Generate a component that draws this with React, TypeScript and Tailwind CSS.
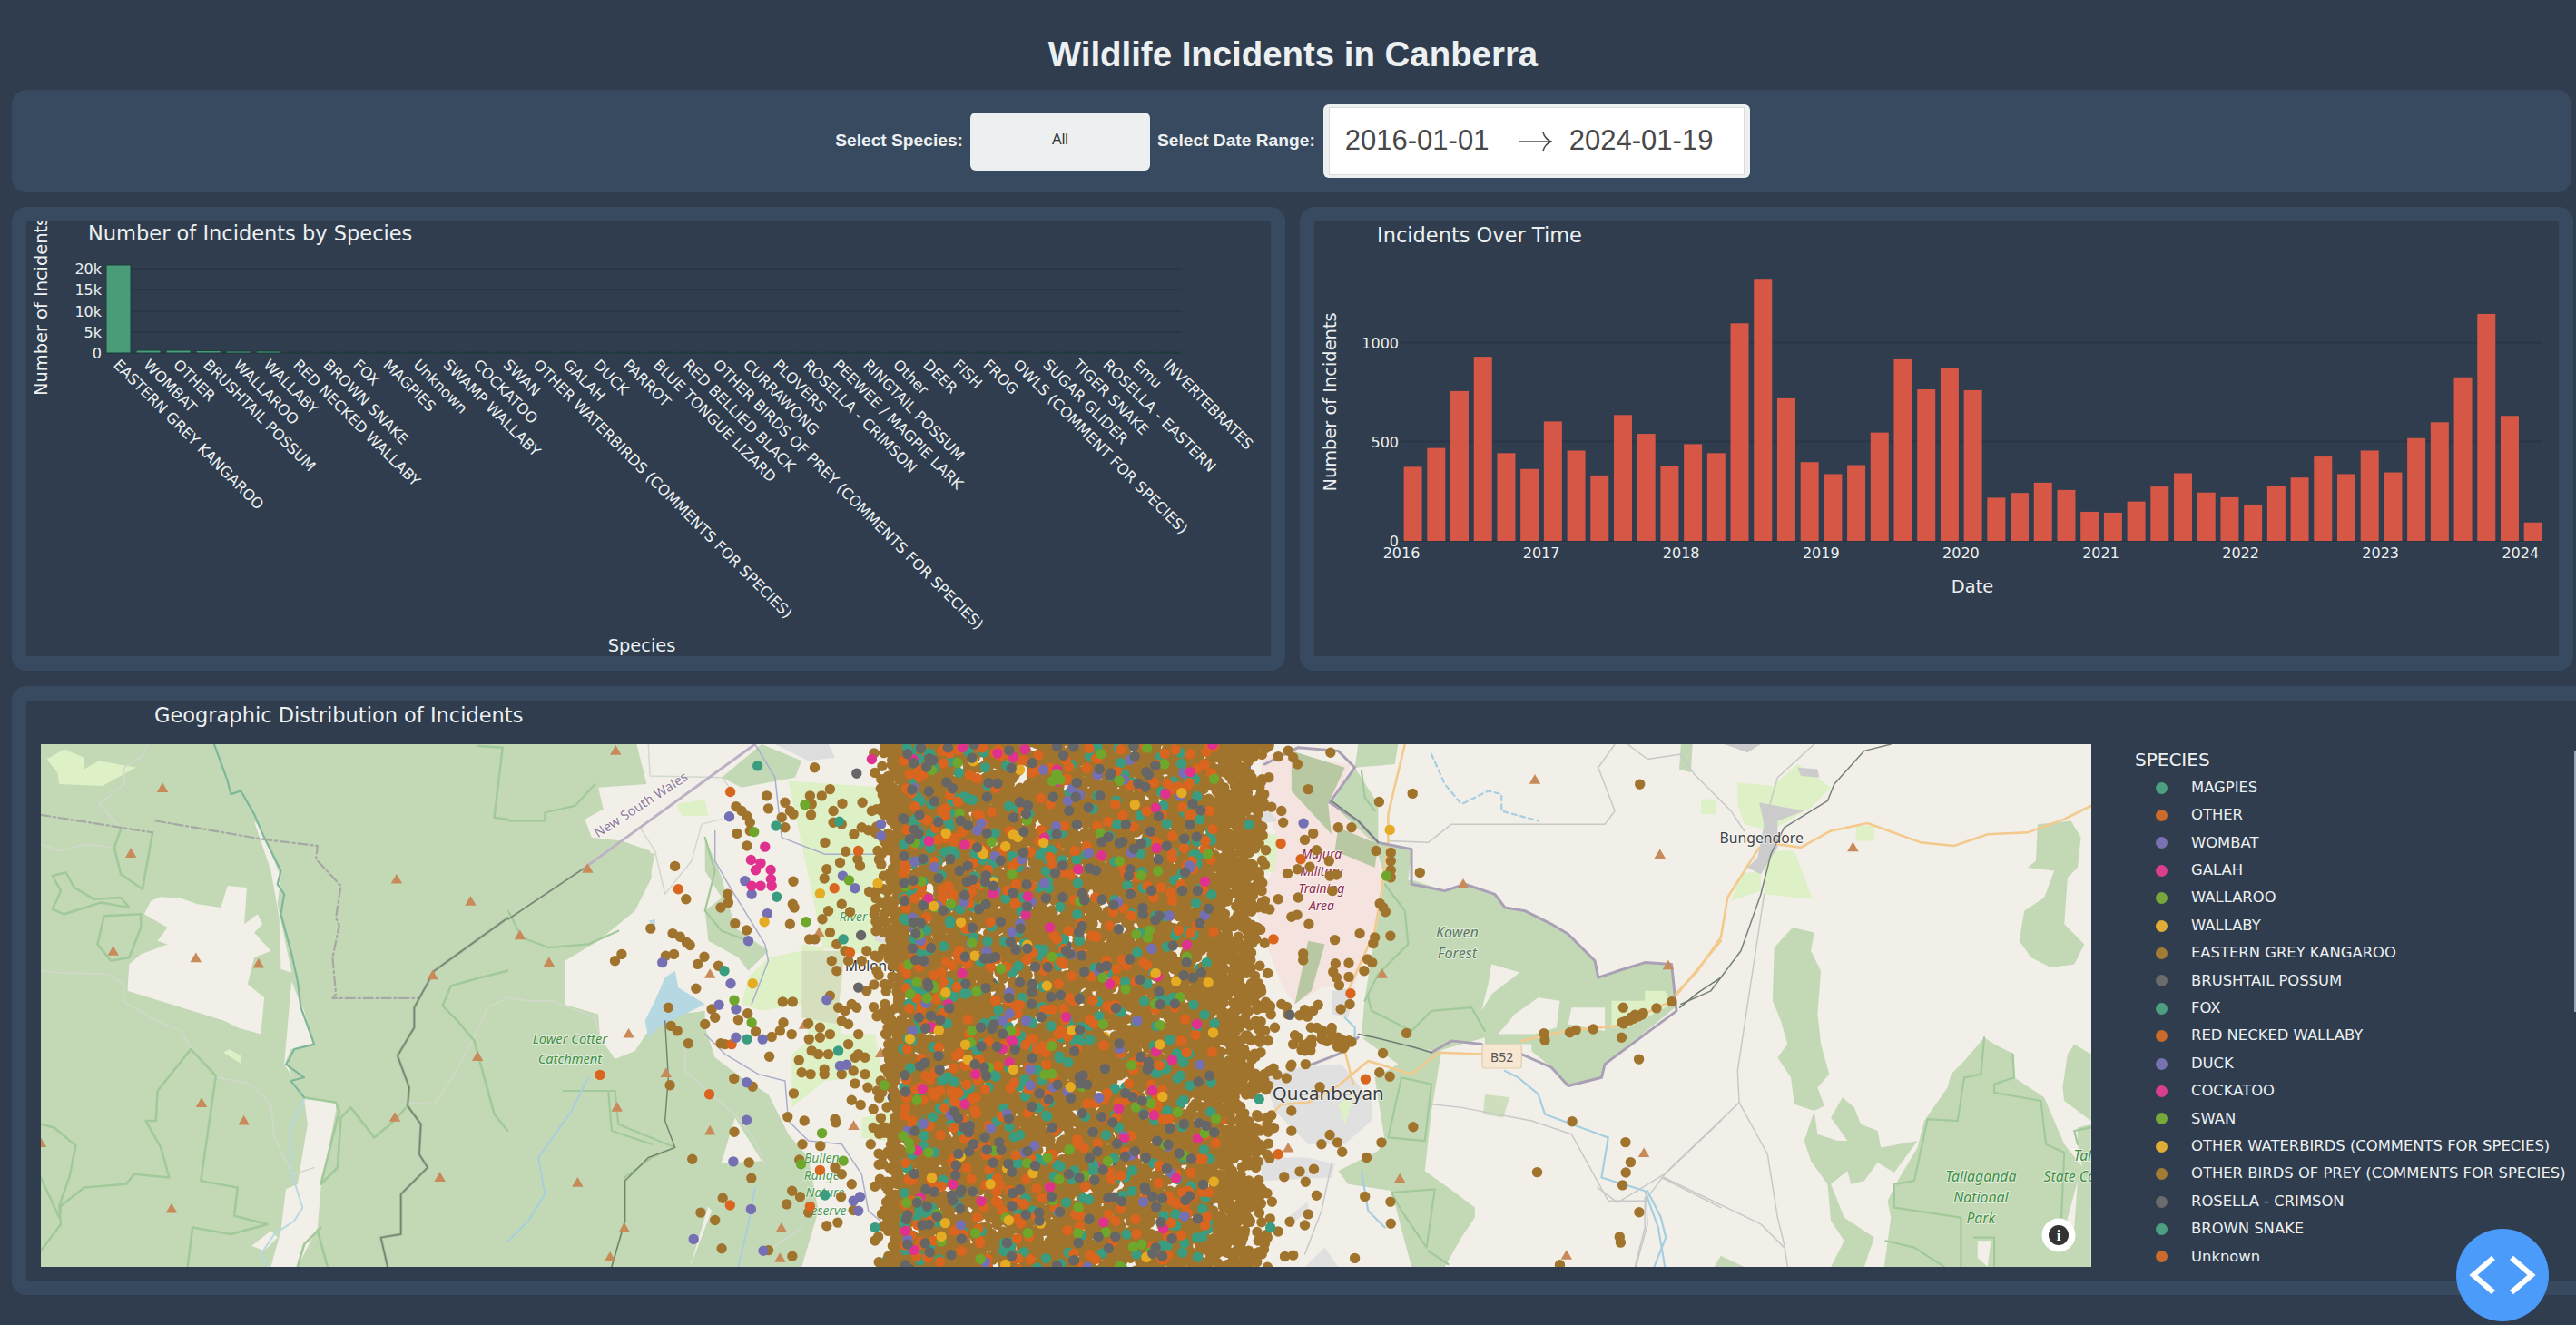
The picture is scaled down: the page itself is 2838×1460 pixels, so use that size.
const PLOT_FONT = "'DejaVu Sans', sans-serif";
const MAP_FONT = "'Noto Sans', 'Open Sans', sans-serif";

const speciesBars = [
  ["EASTERN GREY KANGAROO", 97],
  ["WOMBAT", 3],
  ["OTHER", 3],
  ["BRUSHTAIL POSSUM", 2.5],
  ["WALLAROO", 2],
  ["WALLABY", 2],
  ["RED NECKED WALLABY", 1],
  ["BROWN SNAKE", 1],
  ["FOX", 1],
  ["MAGPIES", 1],
  ["Unknown", 1],
  ["SWAMP WALLABY", 1],
  ["COCKATOO", 1],
  ["SWAN", 1],
  ["OTHER WATERBIRDS (COMMENTS FOR SPECIES)", 1],
  ["GALAH", 1],
  ["DUCK", 1],
  ["PARROT", 1],
  ["BLUE TONGUE LIZARD", 1],
  ["RED BELLIED BLACK", 1],
  ["OTHER BIRDS OF PREY (COMMENTS FOR SPECIES)", 1],
  ["CURRAWONG", 1],
  ["PLOVERS", 1],
  ["ROSELLA - CRIMSON", 1],
  ["PEEWEE / MAGPIE LARK", 1],
  ["RINGTAIL POSSUM", 1],
  ["Other", 1],
  ["DEER", 1],
  ["FISH", 1],
  ["FROG", 1],
  ["OWLS (COMMENT FOR SPECIES)", 1],
  ["SUGAR GLIDER", 1],
  ["TIGER SNAKE", 1],
  ["ROSELLA - EASTERN", 1],
  ["Emu", 1],
  ["INVERTEBRATES", 1],
] as const;

// top edge of each two-month bar, in px from the top of the page
const timeTops = [
  1090, 1046, 913, 833, 1058, 1095, 984, 1052, 1110, 969, 1013, 1088, 1037, 1058, 755, 651, 930,
  1079, 1107, 1086, 1010, 839, 909, 860, 911, 1162, 1151, 1127, 1144, 1195, 1197, 1171, 1136, 1105,
  1150, 1161, 1178, 1135, 1115, 1066, 1107, 1052, 1103, 1023, 986, 881, 733, 971, 1220,
].map((v) => v / 2.119);

const legendColors = [
  "bg-[#4da07f]",
  "bg-[#cc6a2b]",
  "bg-[#7872b0]",
  "bg-[#d93f8e]",
  "bg-[#77a83a]",
  "bg-[#dfad36]",
  "bg-[#a27b34]",
  "bg-[#6b6b6b]",
];

const legendItems = [
  "MAGPIES",
  "OTHER",
  "WOMBAT",
  "GALAH",
  "WALLAROO",
  "WALLABY",
  "EASTERN GREY KANGAROO",
  "BRUSHTAIL POSSUM",
  "FOX",
  "RED NECKED WALLABY",
  "DUCK",
  "COCKATOO",
  "SWAN",
  "OTHER WATERBIRDS (COMMENTS FOR SPECIES)",
  "OTHER BIRDS OF PREY (COMMENTS FOR SPECIES)",
  "ROSELLA - CRIMSON",
  "BROWN SNAKE",
  "Unknown",
];

const BROWN = "#a0742c";
const dotColors = {
  teal: "#3a9d7f",
  orange: "#d9651f",
  purple: "#7570b3",
  pink: "#e0318f",
  green: "#6ea72b",
  yellow: "#e4ab23",
  grey: "#666666",
};

const SCALE = 0.3673;
const TILE_X = { a: 0, b: 515, c: 1275, d: 1715 };

function parsePoints(s: string, ox: number) {
  return s
    .trim()
    .split(/\s+/)
    .map((p) => {
      const [x, y] = p.split(",").map(Number);
      return [ox + x * SCALE, y * SCALE] as const;
    });
}

function dotsPath(points: ReadonlyArray<readonly [number, number]>) {
  return points.map(([x, y]) => `M${x.toFixed(1)} ${y.toFixed(1)}h0`).join("");
}

function makeRandom(seed: number) {
  return () => {
    seed = (seed + 0x6d2b79f5) | 0;
    let t = Math.imul(seed ^ (seed >>> 15), 1 | seed);
    t = (t + Math.imul(t ^ (t >>> 7), 61 | t)) ^ t;
    return ((t ^ (t >>> 14)) >>> 0) / 4294967296;
  };
}

const brownB =
  "919,70 775,155 780,193 905,155 910,180 908,212 683,187 700,200 715,215 725,235 725,260 686,268 716,305 830,175 845,200 820,220 830,250 855,210 940,155 965,135 975,200 975,235 1000,240 1002,178 1062,175 1090,200 1105,195 1037,270 1060,250 1080,258 950,295 1012,322 1050,320 1048,345 995,355 1055,365 955,375 948,403 855,412 1108,320 853,480 858,490 658,450 660,475 637,490 680,538 715,558 845,540 1000,480 1025,503 960,500 942,525 500,366 533,465 427,553 493,568 515,578 535,595 545,603 320,650 340,630 472,635 497,630 568,660 588,638 630,665 563,733 480,790 610,795 620,820 590,840 488,845 507,860 540,898 637,898 650,900 690,827 718,808 742,862 790,878 815,860 825,835 850,870 823,773 853,773 900,838 902,885 935,850 935,880 965,870 910,920 930,930 960,930 783,937 872,948 880,985 907,990 948,975 948,990 1000,990 1035,980 1070,990 1040,1018 1040,940 1070,940 1030,1068 1057,1082 1095,1095 677,1003 733,1027 485,1023 856,1048 838,1118 888,1130 980,1125 982,1135 1095,1150 1087,1200 678,1163 882,1200 936,1205 552,1245 722,1255 873,1247 729,1302 643,1362 835,1380 851,1340 875,1358 998,1358 577,1405 620,1428 900,1405 955,1445 988,1435 640,1513 780,1518 852,1536 980,1270 1000,1290 1030,1320 1035,1398 903,585 920,585 965,565 985,600 1010,620 985,680 1020,650 970,650 965,755 990,790 1010,800 1030,780 1060,650 1075,620 1100,635 1075,740 1045,790 1000,830 1020,840 1050,870 1020,900 1050,930";
const brownC =
  "397,25 330,135 198,150 220,188 250,200 255,235 212,100 240,37 298,60 285,40 270,20 543,173 643,148 1325,120 420,250 460,250 345,268 320,287 203,318 355,318 534,320 578,325 578,350 393,350 335,368 298,375 268,388 395,395 415,392 665,385 578,378 578,400 403,440 300,460 240,465 200,470 545,478 555,490 562,503 297,512 280,518 332,540 485,568 577,575 530,580 410,587 525,598 315,628 315,648 412,658 452,657 508,645 522,655 498,680 405,683 452,698 415,700 423,723 455,780 360,782 428,795 320,797 345,800 625,867 230,850 554,927 460,893 290,873 300,880 285,900 320,920 340,900 370,860 400,860 420,880 435,912 322,960 265,1002 544,985 575,997 365,1028 280,1100 212,1122 645,1148 210,1163 280,1160 395,1172 370,1200 418,1195 432,1223 190,1213 550,1195 505,1240 1122,1132 1017,1284 1282,1194 1297,1254 1283,1285 1273,1323 1323,1404 1264,1478 1267,1495 500,1357 577,1373 578,1438 355,1354 347,1275 305,1282 258,1298 322,1313 195,1340 185,1355 330,1410 275,1433 320,1443 240,1462 200,1480 200,1498 130,1495 45,1505 97,1527 260,1537 285,1533 470,1542 1085,1562 150,1565 1037,868 1040,888 1115,865 1133,858 1185,855 1275,790 1270,880 1322,945 1421,772 1375,792";

const sparse: Record<keyof typeof dotColors, string[]> = {
  teal: ["748,65 803,245 993,232 805,458 648,680 716,885 990,920 950,1353 1005,585 1100,1450", "152,242 217,1450 183,1065"],
  orange: ["666,143 510,435 275,992 670,900 603,1050 935,1278 905,1387 665,1383 978,432 1050,320 1025,625", "248,298 308,345 226,585 457,748 502,1005 240,1230"],
  purple: ["663,217 710,410 730,450 777,508 720,590 462,655 667,718 632,782 683,795 683,880 763,885 715,1015 715,1128 675,1252 728,1395 556,1485 765,1520 1040,432 1118,240 1118,275 1003,395 995,965 1015,962 1035,1370 1055,1358 1050,1400 955,767", "316,237"],
  pink: ["770,308 728,347 757,357 742,378 787,377 788,405 730,425 757,425 790,425 1090,45", ""],
  green: ["890,182 737,263 893,533 1022,408 678,768 730,835 941,1167 1005,1250 878,1260 1128,1023", "565,395"],
  yellow: ["935,448 768,533 733,718 1108,418", "575,257"],
  grey: ["1058,573 1050,730 1045,88", "275,812"],
};

function buildDots() {
  const random = makeRandom(20240119);
  const under: Record<string, [number, number][]> = {};
  const over: Record<string, [number, number][]> = {};
  const keys = Object.keys(dotColors);
  keys.forEach((k) => {
    under[k] = [];
    over[k] = [];
  });
  const pick = () => {
    const r = random();
    if (r < 0.34) return "orange";
    if (r < 0.6) return "teal";
    if (r < 0.82) return "grey";
    if (r < 0.87) return "purple";
    if (r < 0.91) return "pink";
    if (r < 0.97) return "green";
    return "yellow";
  };
  // a run of dots along a road, with some scatter either side
  const road = (x1: number, y1: number, x2: number, y2: number, n: number, spread: number) => {
    const out: [number, number][] = [];
    for (let i = 0; i < n; i++) {
      const t = random();
      out.push([
        TILE_X.c + (x1 + (x2 - x1) * t + (random() - 0.5) * spread) * SCALE,
        (y1 + (y2 - y1) * t + (random() - 0.5) * spread) * SCALE,
      ]);
    }
    return out;
  };
  // the dense band of the scatter: left edge ~ 925, right edge ~ 1341 in map px
  const brown: [number, number][] = [];
  for (let i = 0; i < 9000; i++) {
    const y = random() * 586 - 5;
    const edge = (random() + random()) * 22 - 22;
    const x = 930 + edge + random() * (411 - edge * 2);
    brown.push([x, y]);
  }
  for (let i = 0; i < 300; i++) {
    under[pick()].push([930 + random() * 400, random() * 580]);
  }
  for (let i = 0; i < 1500; i++) {
    const x = 950 + Math.pow(random(), 1.2) * 345;
    over[pick()].push([x, random() * 580]);
  }
  brown.push(...parsePoints(brownB, TILE_X.b), ...parsePoints(brownC, TILE_X.c));
  brown.push(...road(1270, 838, 1355, 795, 14, 8));
  brown.push(...road(180, 775, 320, 810, 10, 30));
  brown.push(...road(320, 830, 440, 905, 12, 40));
  brown.push(...road(300, 920, 420, 850, 9, 40));
  brown.push(...road(180, 1000, 300, 960, 8, 35));
  keys.forEach((k) => {
    const [b, c] = sparse[k as keyof typeof dotColors];
    over[k].push(...parsePoints(b, TILE_X.b));
    if (c) over[k].push(...parsePoints(c, TILE_X.c));
  });
  return { brown, under, over };
}

const dots = buildDots();

function triangles(s: string) {
  return s
    .trim()
    .split(/\s+/)
    .map((p) => {
      const [x, y] = p.split(",").map(Number);
      return `M${x - 17} ${y + 14}h34l-17 -29z`;
    })
    .join("");
}

function Lines({ d, stroke, w, dash }: { d: string[]; stroke: string; w: number; dash?: string }) {
  return (
    <g fill="none" stroke={stroke} strokeWidth={w} strokeLinejoin="round" strokeLinecap="round" strokeDasharray={dash}>
      {d.map((p) => (
        <polyline key={p} points={p} />
      ))}
    </g>
  );
}

function Polys({ d, fill }: { d: string[]; fill: string }) {
  return (
    <g fill={fill}>
      {d.map((p) => (
        <polygon key={p} points={p} />
      ))}
    </g>
  );
}

const FOREST = "#c3d9b6";
const PALE = "#def0c6";
const LAND = "#f2efe9";
const EDGE = "#a2c99a";
const TRI = "#c98a5a";
const PATH = "#d2d8cc";
const ROADLINE = "#c8c8c8";
const WATER = "#b5d8e3";
const BORDER = "#aaa0b6";

function MapLabel({
  x,
  y,
  size,
  fill,
  children,
  italic = true,
  anchor = "middle",
}: {
  x: number;
  y: number;
  size: number;
  fill: string;
  children: string;
  italic?: boolean;
  anchor?: "middle" | "start";
}) {
  return (
    <text
      x={x}
      y={y}
      fontSize={size}
      fill={fill}
      fontFamily={MAP_FONT}
      fontStyle={italic ? "italic" : "normal"}
      textAnchor={anchor}
      stroke="#ffffff"
      strokeOpacity={0.55}
      strokeWidth={5}
      paintOrder="stroke"
    >
      {children}
    </text>
  );
}

function TerrainMap() {
  const s = `scale(${SCALE})`;
  return (
    <svg width={2259} height={576} viewBox="0 0 2259 576" className="block shrink-0 bg-[#f2efe9]">
      {/* west: pine forest and Cotter */}
      <g transform={s}>
        <rect x={0} y={0} width={1402} height={1568} fill={FOREST} />
        <Polys
          fill={LAND}
          d={[
            "310,510 330,470 360,458 420,462 470,480 540,490 560,425 618,430 610,540 650,510 665,540 640,565 690,620 640,640 620,720 670,760 660,870 590,850 550,830 260,740 265,660 300,630 380,600 350,590 380,550",
            "640,232 660,250 720,400 710,480 752,685 720,675 715,520 690,380",
            "752,710 775,770 790,800 815,900 750,915 735,950 755,1000 730,960",
            "790,1065 885,1075 885,1100 840,1330 830,1450 770,1568 690,1568 720,1460 735,1335 770,1320 800,1140",
            "632,1505 690,1460 710,1480 670,1520",
          ]}
        />
        <Polys
          fill={PALE}
          d={["18,45 70,15 130,40 130,75 175,50 285,70 185,125 55,120 50,85", "548,925 565,915 600,935 600,958"]}
        />
        <Lines
          stroke={PATH}
          w={4}
          d={[
            "320,0 300,40 250,70 250,120 175,180 240,250",
            "0,300 60,320 130,300 220,310",
            "0,680 50,685 200,690 250,720 245,770 330,820 420,860 450,910 530,1000 630,1020 690,1080 700,1180 750,1280 760,1290 820,1270",
            "1100,1075 1180,1080 1240,990 1300,880 1340,790 1400,760",
          ]}
        />
        <Lines
          stroke={EDGE}
          w={7}
          d={[
            "240,255 220,310 240,390 305,435 335,265",
            "35,395 75,385 100,430 160,465 240,460 265,490 180,475 70,510 35,495 60,440 35,395",
            "190,515 300,510 300,550 265,640 210,650 170,600 190,515",
            "1310,5 1385,10 1360,220 1470,235 1485,125 1515,125 1535,0",
            "450,915 350,1040 345,1130 315,1130 360,1210 385,1300 280,1290 255,1320 130,1330 60,1385 55,1420 0,1300",
            "450,915 525,995 480,1310 590,1330 580,1415 680,1440 570,1470 455,1450 440,1568",
            "0,1140 40,1150 105,1205 85,1300 55,1385 60,1440 0,1520",
            "790,1060 885,1075 895,1100 840,1320 890,1270 900,1120 930,1090 1000,1180 1060,1130 1100,1085",
            "1400,680 1320,700 1230,725 1205,785 1250,830 1300,890 1360,1110 1400,1160",
            "840,1450 790,1500 770,1568",
            "830,1460 860,1568",
          ]}
        />
        <Lines
          stroke="#7fb79a"
          w={6}
          d={["520,0 560,110 570,150 600,140 640,210 670,280 720,380 710,420 730,450 720,510 750,620 770,710 780,790 820,900 760,915 745,945 735,960 790,1000 750,1010 790,1060"]}
        />
        <Lines stroke={WATER} w={5} d={["790,1065 750,1150 750,1280 785,1390 760,1430 700,1470 660,1530 680,1568"]} />
        <Lines stroke="#a7a8a4" w={6} dash="28 10 6 10" d={["0,212 335,265", "345,230 665,285 830,305 825,345 900,425 885,520 895,545 875,640 885,750 875,762 1130,762"]} />
        <Lines stroke="#a6bc9f" w={9} d={["1402,520 1180,680 1120,790 1120,850 1070,935 1105,1030 1100,1085 1140,1140 1135,1230 1160,1270 1080,1350 1080,1470 1020,1480 1040,1568"]} />
        <Lines stroke="#74836f" w={4} d={["1402,520 1180,680 1120,790 1120,850 1070,935 1105,1030 1100,1085 1140,1140 1135,1230 1160,1270 1080,1350 1080,1470 1020,1480 1040,1568"]} />
        <path fill={TRI} d={triangles("365,130 270,326 217,620 465,640 653,657 1067,404 1289,470 1175,692 1310,936 1062,1118 482,1075 609,1128 392,1392 1197,1298 0,1195")} />
      </g>

      {/* Cotter to Molonglo */}
      <g transform={`translate(${TILE_X.b}) ${s}`}>
        <rect x={0} y={0} width={1200} height={1568} fill={LAND} />
        <path
          fill={FOREST}
          d="M0 0L385 0L415 120L270 130L285 195L230 225L250 280L340 290L425 320L430 400L380 500L270 590L170 650L165 720L130 770L270 810L275 880L320 945L380 920L440 830L510 810L590 800L590 850L620 940L700 1000L780 1050L840 1170L900 1240L930 1400L880 1568L545 1568L610 1400L555 1330L600 1260L760 1250L680 1120L0 1568Z"
        />
        <path fill={FOREST} d="M0 600L170 640L165 1568L0 1568ZM100 1000L680 1120L545 1568L100 1568Z" />
        <Polys
          fill={FOREST}
          d={[
            "590,280 640,400 680,550 780,620 720,680 690,640 600,590 590,500 640,460 590,380",
            "760,0 880,50 860,100 700,130 640,100",
            "350,300 440,330 420,420 360,500 330,480 360,400",
          ]}
        />
        <Polys
          fill={PALE}
          d={[
            "840,110 1130,130 1130,640 880,600 890,770 900,890 850,930 850,1090 950,1010 1060,1000 1140,1100 1100,870 1000,870",
            "505,180 590,165 600,215 520,215",
            "780,640 880,620 880,780 760,800 700,780 720,700",
            "1060,1120 1150,1100 1130,1190 1060,1180",
          ]}
        />
        <Polys fill="#d5dfbd" d={["880,620 1010,620 985,840 880,820"]} />
        <Polys fill="#dddddd" d={["1090,540 1150,530 1140,600 1100,590", "800,0 960,0 980,40 900,50"]} />
        <Polys
          fill={WATER}
          d={["470,700 500,680 510,730 590,780 530,810 470,840 450,850 420,880 410,830 440,770", "420,530 440,525 440,545"]}
        />
        <Lines stroke={EDGE} w={6} d={["0,230 110,230 110,205 200,185 260,120", "0,500 40,580 120,610 240,600 330,560", "165,1040 320,1040 330,1140 500,1210 430,1240 350,1300 350,1430 310,1568", "300,1040 310,1160 430,1200", "590,280 620,380 590,500 640,560 720,590"]} />
        <Lines stroke={PATH} w={4} d={["420,0 425,95 640,100 680,150", "0,760 60,770 130,770 260,820 275,880", "530,900 530,980 620,1060 680,1110 735,1180 770,1260", "620,1520 780,1520 880,1450", "395,250 440,320 470,450 550,350 580,240 640,225"]} />
        <Lines stroke="#a9aecb" w={4} d={["740,0 800,100 820,280 950,330 1110,330", "620,260 620,350 660,420 770,600 780,650 730,780", "590,870 650,930 750,990 830,1010 840,1130 900,1190 1000,1200 1060,1290 1080,1400 1200,1500"]} />
        <Lines stroke="#a5cfe0" w={5} d={["0,1490 60,1430 110,1350 90,1240 190,1100 240,1000", "740,1330 720,1440 690,1568"]} />
        <Lines stroke="#7c8878" w={5} d={["0,525 230,370"]} />
        <Lines stroke="#bdb1c6" w={8} d={["230,370 740,0"]} />
        <Lines stroke="#74836f" w={4} d={["470,830 480,1000 470,1130 500,1210 420,1240 350,1310 350,1430 310,1568"]} />
        <path fill={TRI} d={triangles("322,18 238,372 35,572 122,653 605,688 361,867 473,985 326,1088 605,1158 208,1314 348,1450 305,1537 819,1450 815,1540 1036,1143 932,563 888,840 1117,925")} />
        <g transform="rotate(-33 400 185)">
          <MapLabel x={400} y={195} size={40} fill="#8e7a9a" italic={false}>
            New South Wales
          </MapLabel>
        </g>
        <MapLabel x={185} y={898} size={40} fill="#3f8f45">
          Lower Cotter
        </MapLabel>
        <MapLabel x={185} y={958} size={40} fill="#3f8f45">
          Catchment
        </MapLabel>
        <MapLabel x={1035} y={530} size={38} fill="#4b9a55">
          River
        </MapLabel>
        <MapLabel x={940} y={1254} size={38} fill="#4b9a55">
          Bullen
        </MapLabel>
        <MapLabel x={940} y={1306} size={38} fill="#4b9a55">
          Range
        </MapLabel>
        <MapLabel x={950} y={1358} size={38} fill="#4b9a55">
          Nature
        </MapLabel>
        <MapLabel x={950} y={1412} size={38} fill="#4b9a55">
          Reserve
        </MapLabel>
        <MapLabel x={1010} y={682} size={42} fill="#333333" italic={false} anchor="start">
          Molonglo Valley
        </MapLabel>
      </g>

      {/* Queanbeyan and Kowen */}
      <g transform={`translate(${TILE_X.c}) ${s}`}>
        <Polys
          fill={FOREST}
          d={[
            "650,410 740,440 800,420 890,450 920,490 980,500 1060,540 1110,570 1190,650 1200,700 1260,680 1340,655 1420,660 1430,790 1260,930 1220,960 1210,1000 1110,1025 1060,970 1000,920 1000,900 860,900 860,880 720,920 520,900 490,870 500,760 560,400",
            "470,70 540,180 540,290 640,320 630,410 560,400 530,300 400,180",
            "600,0 590,60 470,70 480,0",
            "490,880 700,920 730,920 720,980 700,1100 680,1280 750,1330 830,1390 830,1420 790,1480 740,1568 640,1568 580,1340 450,1320 420,1280 540,1220 560,1190 530,1000 600,960",
          ]}
        />
        <Polys
          fill={LAND}
          d={[
            "880,660 965,685 880,750 850,800 870,720",
            "1020,760 1085,770 1075,850 1010,870 900,870 950,810",
            "1120,790 1220,790 1220,860 1110,840",
          ]}
        />
        <Polys fill={PALE} d={["1240,770 1340,770 1340,740 1400,740 1420,780 1290,850 1240,850", "180,270 240,270 235,385 180,380"]} />
        <Polys fill="#f5e3df" d={["190,30 460,60 400,180 530,300 550,400 530,560 470,720 370,730 290,780 250,720 190,560 170,480 230,370 240,290 190,130"]} />
        <Polys fill="#b7c8a2" d={["280,20 440,70 390,180 400,270 280,140", "420,250 540,300 530,370 410,320", "330,590 380,600 340,740 290,780"]} />
        <Polys fill="#e0e0e0" d={["200,1000 300,970 430,960 520,1070 520,1130 440,1200 330,1200 230,1100", "190,1240 330,1240 410,1260 400,1300 190,1310", "270,1420 330,1370 330,1400 280,1440", "320,1568 380,1510 420,1568"]} />
        <Polys fill="#dedede" d={["400,740 470,730 450,820 400,810", "190,180 240,230 180,240"]} />
        <Polys fill="#cddfbc" d={["860,1050 935,1060 915,1120 855,1110"]} />
        <Polys fill={PALE} d={["420,1080 470,1050 440,1140"]} />
        <Lines stroke={ROADLINE} w={4} d={["1250,0 1200,70 1250,200 1220,240 1020,240 760,240 690,295 570,290", "700,1080 790,1090 1000,1130 1120,1170 1230,1370 1340,1370 1400,1290 1568,1130", "1390,1300 1568,1390", "1340,1360 1340,1450 1310,1568", "400,1260 370,1400 320,1530"]} />
        <Lines stroke="#a5cfe0" w={6} d={["920,980 960,1000 1020,1050 1040,1110 1230,1180 1210,1300 1340,1340 1380,1450 1400,1568", "490,1280 510,1400 560,1450", "440,820 470,850 470,900"]} />
        <Lines stroke="#a5cfe0" w={6} dash="14 12" d={["700,30 740,120 790,180 870,140 910,150 910,200 1020,230"]} />
        <Lines stroke={EDGE} w={6} d={["490,80 500,160 530,200", "570,1180 610,1000 700,1020 680,1190 570,1180", "580,1345 710,1335 685,1510 610,1400 580,1345", "690,1520 750,1560", "510,760 520,800 640,860 700,800 820,790 860,860", "560,420 620,500 630,600 540,690 500,770"]} />
        <Lines stroke="#f3c98c" w={7} d={["620,0 570,210 570,290 550,440 530,560 450,740", "180,1150 250,1080 330,1075 420,1025 510,950 640,990 720,925 850,930", "970,890 1100,860 1260,845 1420,770 1568,590", "440,920 465,1020"]} />
        <Lines stroke={BORDER} w={8} d={["200,60 300,10 420,20 470,70 395,175 480,230 540,295 640,315 640,420 740,440 800,420 890,450 920,490 980,500 1060,540 1110,570 1190,650 1200,700 1260,680 1340,655 1420,660 1435,800 1260,930 1220,960 1210,1000 1110,1025 1060,970 970,930", "330,965 420,930 480,880", "700,925 760,890 850,900"]} />
        <Lines stroke="#6e7a70" w={4} d={["400,170 480,230 540,295", "480,870 530,880 650,910 700,925", "1445,790 1500,745 1568,700"]} />
        <path fill={TRI} d={triangles("1010,105 1385,330 795,418 1410,662 552,688 270,1210 605,1302 1337,1225 1105,1532")} />
        <MapLabel x={370} y={342} size={38} fill="#8c2a4a">
          Majura
        </MapLabel>
        <MapLabel x={370} y={394} size={38} fill="#8c2a4a">
          Military
        </MapLabel>
        <MapLabel x={370} y={447} size={38} fill="#8c2a4a">
          Training
        </MapLabel>
        <MapLabel x={370} y={498} size={38} fill="#8c2a4a">
          Area
        </MapLabel>
        <MapLabel x={777} y={580} size={44} fill="#5e7a60">
          Kowen
        </MapLabel>
        <MapLabel x={777} y={643} size={44} fill="#5e7a60">
          Forest
        </MapLabel>
        <MapLabel x={390} y={1066} size={56} fill="#3b3b3b" italic={false}>
          Queanbeyan
        </MapLabel>
        <rect x={852} y={901} width={118} height={71} rx={8} fill="#f6e6d2" stroke="#e2cbaa" strokeWidth={3} />
        <text x={911} y={953} fontSize={38} fill="#555555" textAnchor="middle" fontFamily={MAP_FONT}>
          B52
        </text>
      </g>

      {/* Bungendore and Tallaganda */}
      <g transform={`translate(${TILE_X.d}) ${s}`}>
        <Polys
          fill={FOREST}
          d={[
            "585,550 650,565 640,620 670,680 660,810 670,900 695,990 660,1030 680,1085 650,1100 660,1170 720,1190 750,1190 700,1120 735,1060 770,1090 790,1140 840,1160 850,1210 960,1190 890,1285 840,1255 800,1310 760,1320 750,1280 700,1320 740,1420 830,1480 800,1568 700,1568 740,1490 700,1430 690,1320 640,1250 620,1190 650,1100 590,1080 580,1000 540,940 570,900 550,830 525,770 530,610",
            "1160,880 1190,900 1250,930 1250,1000 1340,1060 1400,1200 1480,1300 1480,1568 860,1568 880,1420 870,1370 900,1310 960,1210 980,1130 1050,1030 1060,990 1100,950",
            "1320,240 1420,230 1450,280 1440,370 1410,400 1400,540 1460,600 1430,660 1360,670 1300,640 1265,590 1280,500 1340,460 1370,380 1290,370 1315,350",
            "1430,900 1480,930 1480,1130 1400,1070 1395,1030 1410,930",
            "1440,1150 1480,1140 1480,1400 1440,1200",
            "250,0 285,0 280,85 245,75",
            "350,1568 370,1535 440,1568",
          ]}
        />
        <Polys fill={PALE} d={["420,115 525,125 600,60 700,130 640,190 520,260 440,240 420,180", "505,320 590,320 645,465 500,450", "430,390 490,380 490,440 400,470", "775,245 830,245 830,290 775,290", "310,165 355,165 355,210 310,210"]} />
        <Polys fill="#cccccc" d={["485,175 620,200 540,230 540,310 490,390 450,370 480,340 500,240", "600,70 660,75 665,100 610,95", "380,0 490,0 450,25"]} />
        <Lines stroke={ROADLINE} w={4} d={["500,450 420,980 425,1075 200,1290 60,1375 0,1330", "425,1075 510,1230 540,1420 560,1500 570,1568", "200,1300 490,1440 560,1510", "90,0 150,45 250,30 290,90 400,200 440,260", "650,0 540,100 500,240", "145,1340 150,1440 115,1568"]} />
        <Lines stroke="#a5cfe0" w={6} d={["150,1340 190,1420 205,1480 170,1568"]} />
        <Lines stroke="#f3c98c" w={7} d={["1480,185 1400,225 1290,265 1170,270 1070,305 970,295 810,237 700,260 610,310 540,300", "485,310 390,460 370,580 300,680 235,750"]} />
        <Lines stroke="#76807a" w={4} d={["880,0 800,20 710,120 690,170 560,250 520,330 490,450 430,620 340,740 250,780"]} />
        <Lines stroke={EDGE} w={6} d={["1160,880 1150,990 1100,1000 1080,1130 990,1125 950,1310 890,1320 890,1390 1090,1420 1090,1568", "1245,930 1250,1000 1190,1020 1190,1045 1330,1070 1345,1200 1400,1225 1390,1450", "1130,1480 1190,1480 1190,1568", "865,1490 950,1510 1040,1568", "1440,1200 1430,1160 1480,1150"]} />
        <Polys fill={LAND} d={["1140,1490 1180,1490 1170,1568 1140,1540", "1400,1460 1440,1310 1430,1450"]} />
        <path fill={TRI} d={triangles("187,330 766,308")} />
        <MapLabel x={492} y={297} size={43} fill="#444444" italic={false}>
          Bungendore
        </MapLabel>
        <MapLabel x={1150} y={1313} size={43} fill="#3f8f45">
          Tallaganda
        </MapLabel>
        <MapLabel x={1150} y={1375} size={43} fill="#3f8f45">
          National
        </MapLabel>
        <MapLabel x={1150} y={1437} size={43} fill="#3f8f45">
          Park
        </MapLabel>
        <MapLabel x={1428} y={1250} size={43} fill="#3f8f45" anchor="start">
          Tallaganda
        </MapLabel>
        <MapLabel x={1338} y={1313} size={43} fill="#3f8f45" anchor="start">
          State Conservation
        </MapLabel>
      </g>

      {/* incidents */}
      <g fill="none" strokeWidth={11.4} strokeLinecap="round">
        {Object.entries(dotColors).map(([k, c]) => (
          <path key={k} d={dotsPath(dots.under[k])} stroke={c} />
        ))}
        <path d={dotsPath(dots.brown)} stroke={BROWN} />
        {Object.entries(dotColors).map(([k, c]) => (
          <path key={k} d={dotsPath(dots.over[k])} stroke={c} />
        ))}
      </g>

      {/* map info control */}
      <circle cx={2223} cy={541} r={18.5} fill="#ffffff" />
      <circle cx={2223} cy={541} r={11} fill="#333333" />
      <text x={2223} y={547} textAnchor="middle" fontSize={17} fontWeight="bold" fill="#ffffff" fontFamily="'Liberation Serif', serif">
        i
      </text>
    </svg>
  );
}

function SpeciesChart() {
  const grid = [
    [296, "20k"],
    [319, "15k"],
    [343, "10k"],
    [366, "5k"],
    [389, "0"],
  ] as const;
  return (
    <svg width={1371} height={479} viewBox="29 244 1371 479" className="block" fontFamily={PLOT_FONT} fill="#ecf0f1">
      {grid.map(([y, label]) => (
        <g key={label}>
          <line x1={117} x2={1302} y1={y} y2={y} stroke="#283646" strokeWidth={2} />
          <text x={112} y={y + 6} fontSize={16} textAnchor="end">
            {label}
          </text>
        </g>
      ))}
      {speciesBars.map(([name, h], i) => {
        const cx = 130.5 + i * 33.04;
        return (
          <g key={name}>
            <rect x={cx - 13.5} y={389 - h} width={27} height={h} fill="#4a9c78" stroke="#1f3d3d" strokeWidth={1} />
            <text transform={`translate(${cx - 6.5} 403) rotate(45)`} fontSize={16.4}>
              {name}
            </text>
          </g>
        );
      })}
      <text x={97} y={265} fontSize={22.5}>
        Number of Incidents by Species
      </text>
      <text transform="translate(52 436) rotate(-90)" fontSize={19.4}>
        Number of Incidents
      </text>
      <text x={707} y={718} fontSize={19.4} textAnchor="middle">
        Species
      </text>
    </svg>
  );
}

function TimeChart() {
  return (
    <svg width={1371} height={479} viewBox="1448 244 1371 479" className="block" fontFamily={PLOT_FONT} fill="#ecf0f1">
      {[
        [377.5, "1000"],
        [486.5, "500"],
        [596, "0"],
      ].map(([y, label]) => (
        <g key={label}>
          <line x1={1544} x2={2801} y1={y} y2={y} stroke="#283646" strokeWidth={2} />
          <text x={1541} y={Number(y) + 6} fontSize={16} textAnchor="end">
            {label}
          </text>
        </g>
      ))}
      {timeTops.map((top, i) => (
        <rect key={i} x={1546.6 + i * 25.71} y={top} width={20} height={596 - top} fill="#d65745" />
      ))}
      {[2016, 2017, 2018, 2019, 2020, 2021, 2022, 2023, 2024].map((year, i) => (
        <text key={year} x={1544 + i * 154.1} y={615} fontSize={16} textAnchor="middle">
          {year}
        </text>
      ))}
      <text x={1517} y={267} fontSize={22.5}>
        Incidents Over Time
      </text>
      <text transform="translate(1472 443) rotate(-90)" fontSize={19.4} textAnchor="middle">
        Number of Incidents
      </text>
      <text x={2173} y={653} fontSize={19.4} textAnchor="middle">
        Date
      </text>
    </svg>
  );
}

export default function App() {
  return (
    <div className="relative h-screen overflow-hidden bg-[#2f3d4f] font-['Liberation_Sans',sans-serif]">
      <h1 className="flex h-[99px] items-center justify-center pl-[11px] pt-[21px] text-[38.4px] font-bold text-[#ecf0f1]">
        Wildlife Incidents in Canberra
      </h1>

      <div className="ml-[13px] mr-[5px] flex h-[113px] items-center justify-center gap-[8px] rounded-[16px] bg-[#384a60] pl-[2px]">
        <label className="text-[19.2px] font-bold text-[#ecf0f1]">Select Species:</label>
        <div className="flex h-[64px] w-[198px] items-center justify-center rounded-[6px] bg-[#ecf0f1] pb-[4px] text-[16px] text-[#333333]">
          All
        </div>
        <label className="text-[19.2px] font-bold text-[#ecf0f1]">Select Date Range:</label>
        <div className="ml-px h-[81px] w-[470px] rounded-[6px] bg-[#ecf0f1] px-[6px] py-[3px]">
          <div className="flex h-full items-center border border-[#dbdbdb] bg-white pl-[17px] text-[31px] text-[#484848]">
            <span className="w-[156px] whitespace-nowrap">2016-01-01</span>
            <svg width={36} height={22} viewBox="0 0 36 22" className="ml-[36px] mr-[19px]" fill="none" stroke="#484848" strokeWidth={1.5}>
              <path d="M0 11H34" />
              <path d="M26 1Q28 8 35 11Q28 14 26 21" />
            </svg>
            <span>2024-01-19</span>
          </div>
        </div>
      </div>

      <div className="ml-[13px] mr-[3px] mt-[16px] grid h-[511px] grid-cols-2 gap-[16px]">
        <div className="rounded-[16px] bg-[#384a60] p-[16px]">
          <div className="h-full overflow-hidden bg-[#2f3d4f]">
            <SpeciesChart />
          </div>
        </div>
        <div className="rounded-[16px] bg-[#384a60] p-[16px]">
          <div className="h-full overflow-hidden bg-[#2f3d4f]">
            <TimeChart />
          </div>
        </div>
      </div>

      <div className="ml-[13px] mt-[17px] h-[671px] w-[2900px] rounded-[16px] bg-[#384a60] p-[16px]">
        <div className="h-full bg-[#2f3d4f] pl-[16px] font-['DejaVu_Sans',sans-serif] text-[#ecf0f1]">
          <div className="flex h-[48px] items-center pb-[15px] pl-[125px] text-[22.5px]">
            Geographic Distribution of Incidents
          </div>
          <div className="flex">
            <TerrainMap />
            <div className="ml-[48px] pt-[6px]">
              <div className="h-[22px] text-[20px] leading-[22px]">SPECIES</div>
              <ul className="mt-[5px]">
                {legendItems.map((name, i) => (
                  <li key={name} className="flex h-[30.4px] items-center whitespace-nowrap text-[16.4px]">
                    <span className={`ml-[23px] size-[13px] rounded-full ${legendColors[i % 8]}`} />
                    <span className="ml-[26px]">{name}</span>
                  </li>
                ))}
              </ul>
            </div>
          </div>
        </div>
      </div>

      <div className="absolute right-0 top-[827px] h-[288px] w-[2px] bg-[#9aa5b5]" />

      <button className="absolute bottom-[4px] right-[30px] size-[102px] rounded-full bg-[#4b9bfa]">
        <svg width={102} height={102} viewBox="0 0 102 102" fill="none" stroke="#ffffff" strokeWidth={6}>
          <polyline points="41,32 19,51 41,70" />
          <polyline points="61,32 83,51 61,70" />
        </svg>
      </button>
    </div>
  );
}
